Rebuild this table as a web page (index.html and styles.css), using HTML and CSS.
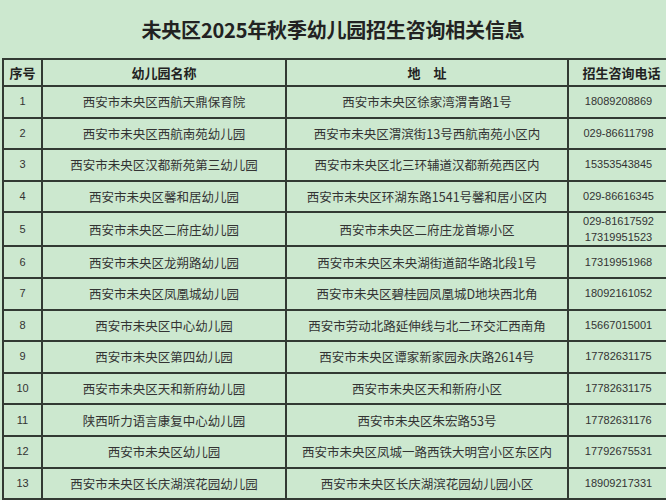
FILE: index.html
```html
<!DOCTYPE html>
<html lang="zh-CN">
<head>
<meta charset="utf-8">
<title>未央区2025年秋季幼儿园招生咨询相关信息</title>
<link rel="stylesheet" href="styles.css">
</head>
<body>
<h1 class="title">未央区2025年秋季幼儿园招生咨询相关信息</h1>
<table class="info">
  <colgroup>
    <col class="c-no"><col class="c-name"><col class="c-addr"><col class="c-tel">
  </colgroup>
  <thead>
    <tr><th>序号</th><th>幼儿园名称</th><th>地&emsp;址</th><th>招生咨询电话</th></tr>
  </thead>
  <tbody>
    <tr><td class="no">1</td><td>西安市未央区西航天鼎保育院</td><td>西安市未央区徐家湾渭青路1号</td><td class="tel">18089208869</td></tr>
    <tr><td class="no">2</td><td>西安市未央区西航南苑幼儿园</td><td>西安市未央区渭滨街13号西航南苑小区内</td><td class="tel">029-86611798</td></tr>
    <tr><td class="no">3</td><td>西安市未央区汉都新苑第三幼儿园</td><td>西安市未央区北三环辅道汉都新苑西区内</td><td class="tel">15353543845</td></tr>
    <tr><td class="no">4</td><td>西安市未央区馨和居幼儿园</td><td>西安市未央区环湖东路1541号馨和居小区内</td><td class="tel">029-86616345</td></tr>
    <tr><td class="no">5</td><td>西安市未央区二府庄幼儿园</td><td>西安市未央区二府庄龙首塬小区</td><td class="tel two">029-81617592<br>17319951523</td></tr>
    <tr><td class="no">6</td><td>西安市未央区龙朔路幼儿园</td><td>西安市未央区未央湖街道韶华路北段1号</td><td class="tel">17319951968</td></tr>
    <tr><td class="no">7</td><td>西安市未央区凤凰城幼儿园</td><td>西安市未央区碧桂园凤凰城D地块西北角</td><td class="tel">18092161052</td></tr>
    <tr><td class="no">8</td><td>西安市未央区中心幼儿园</td><td>西安市劳动北路延伸线与北二环交汇西南角</td><td class="tel">15667015001</td></tr>
    <tr><td class="no">9</td><td>西安市未央区第四幼儿园</td><td>西安市未央区谭家新家园永庆路2614号</td><td class="tel">17782631175</td></tr>
    <tr><td class="no">10</td><td>西安市未央区天和新府幼儿园</td><td>西安市未央区天和新府小区</td><td class="tel">17782631175</td></tr>
    <tr><td class="no">11</td><td>陕西听力语言康复中心幼儿园</td><td>西安市未央区朱宏路53号</td><td class="tel">17782631176</td></tr>
    <tr><td class="no">12</td><td>西安市未央区幼儿园</td><td>西安市未央区凤城一路西铁大明宫小区东区内</td><td class="tel">17792675531</td></tr>
    <tr><td class="no">13</td><td>西安市未央区长庆湖滨花园幼儿园</td><td>西安市未央区长庆湖滨花园幼儿园小区</td><td class="tel">18909217331</td></tr>
  </tbody>
</table>
</body>
</html>
```
FILE: styles.css
```css
html, body {
  margin: 0;
  padding: 0;
}
body {
  width: 666px;
  height: 500px;
  overflow: hidden;
  background: #cce8cf;
  font-family: "Noto Sans CJK SC", "Liberation Sans", sans-serif;
  color: #2a2a2a;
}
.title {
  margin: 0;
  height: 58px;
  display: flex;
  align-items: center;
  justify-content: center;
  font-size: 20px;
  font-weight: bold;
  color: #222;
  letter-spacing: -0.2px;
}
.info {
  margin-left: 2px;
  border-collapse: collapse;
  table-layout: fixed;
  width: 672px;
}
.c-no { width: 39px; }
.c-name { width: 244px; }
.c-addr { width: 282px; }
.c-tel { width: 107px; }
.info th, .info td {
  border: 2px solid #323a33;
  padding: 0;
  text-align: center;
  vertical-align: middle;
  white-space: nowrap;
  overflow: hidden;
}
.info th {
  height: 25px;
  font-size: 13px;
  font-weight: bold;
  color: #222;
}
.info td {
  height: 29.6px;
  font-size: 12.5px;
  line-height: 15px;
  color: #333;
}
.info td.no {
  font-family: "Liberation Sans", sans-serif;
  font-size: 11px;
}
.info td.tel {
  font-family: "Liberation Sans", sans-serif;
  font-size: 11px;
  padding-right: 6px;
}
.info td.two {
  line-height: 16px;
}
```
